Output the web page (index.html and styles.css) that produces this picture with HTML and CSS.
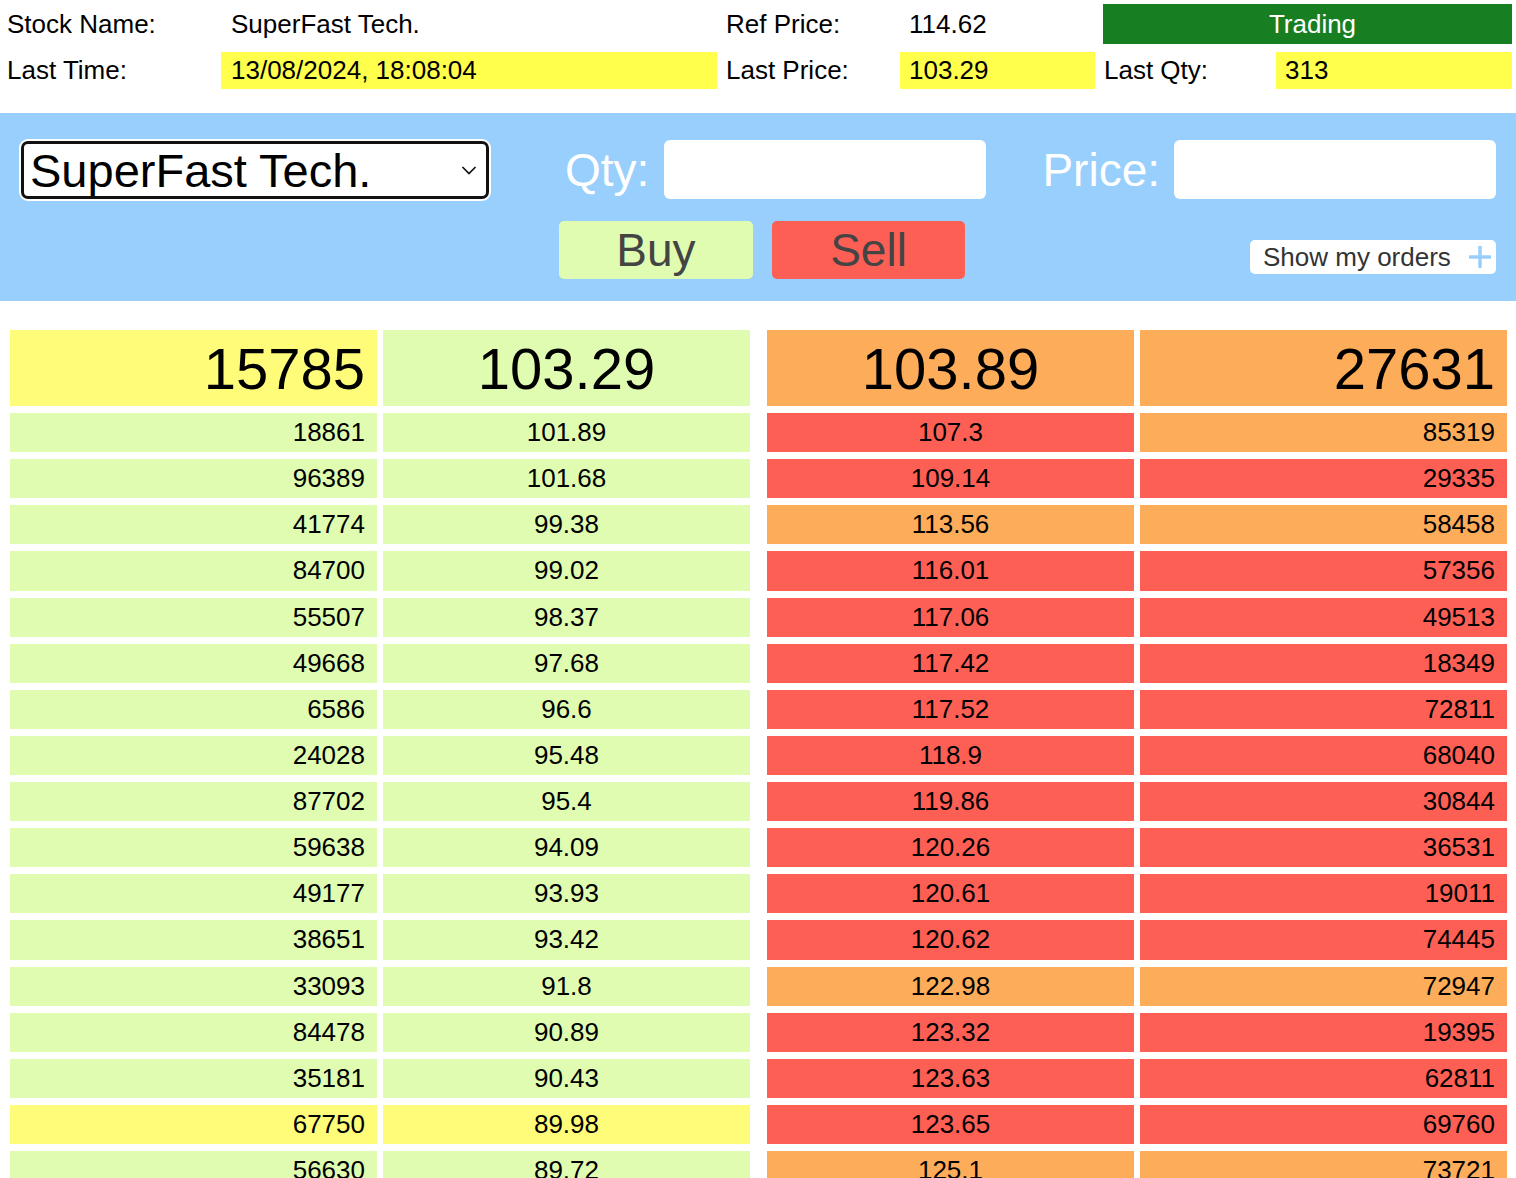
FILE: index.html
```html
<!DOCTYPE html>
<html lang="en">
<head>
<meta charset="utf-8">
<title>SuperFast Tech. Order Book</title>
<link rel="stylesheet" href="styles.css">
</head>
<body>
<div class="info">
  <div class="cell label">Stock Name:</div>
  <div class="cell value">SuperFast Tech.</div>
  <div class="cell label">Ref Price:</div>
  <div class="cell value">114.62</div>
  <div class="cell status">Trading</div>
  <div class="cell label">Last Time:</div>
  <div class="cell value hl">13/08/2024, 18:08:04</div>
  <div class="cell label">Last Price:</div>
  <div class="cell value hl">103.29</div>
  <div class="cell label">Last Qty:</div>
  <div class="cell value hl">313</div>
</div>

<div class="panel">
  <div class="panel-row">
    <div class="stock-select">
      <select class="select">
        <option>SuperFast Tech.</option>
      </select>
      <svg class="chevron" width="16" height="9" viewBox="0 0 16 9"><path d="M1.5 1 L8 7.5 L14.5 1" fill="none" stroke="#111" stroke-width="1.7"/></svg>
    </div>
    <label class="field-label qty-label">Qty:</label>
    <input class="field" type="text">
    <label class="field-label price-label">Price:</label>
    <input class="field" type="text">
  </div>
  <div class="panel-row actions">
    <button class="btn buy">Buy</button>
    <button class="btn sell">Sell</button>
    <button class="orders">Show my orders <svg class="plus" width="24" height="24" viewBox="0 0 24 24"><path d="M12 1 V23 M1 12 H23" stroke="#99cffc" stroke-width="3.5"/></svg></button>
  </div>
</div>

<div class="book">
  <div class="side">
    <div class="c y big right">15785</div><div class="c g big center">103.29</div>
    <div class="c g right">18861</div><div class="c g center">101.89</div>
    <div class="c g right">96389</div><div class="c g center">101.68</div>
    <div class="c g right">41774</div><div class="c g center">99.38</div>
    <div class="c g right">84700</div><div class="c g center">99.02</div>
    <div class="c g right">55507</div><div class="c g center">98.37</div>
    <div class="c g right">49668</div><div class="c g center">97.68</div>
    <div class="c g right">6586</div><div class="c g center">96.6</div>
    <div class="c g right">24028</div><div class="c g center">95.48</div>
    <div class="c g right">87702</div><div class="c g center">95.4</div>
    <div class="c g right">59638</div><div class="c g center">94.09</div>
    <div class="c g right">49177</div><div class="c g center">93.93</div>
    <div class="c g right">38651</div><div class="c g center">93.42</div>
    <div class="c g right">33093</div><div class="c g center">91.8</div>
    <div class="c g right">84478</div><div class="c g center">90.89</div>
    <div class="c g right">35181</div><div class="c g center">90.43</div>
    <div class="c y right">67750</div><div class="c y center">89.98</div>
    <div class="c g right">56630</div><div class="c g center">89.72</div>
  </div>
  <div class="side">
    <div class="c o big center">103.89</div><div class="c o big right">27631</div>
    <div class="c r center">107.3</div><div class="c o right">85319</div>
    <div class="c r center">109.14</div><div class="c r right">29335</div>
    <div class="c o center">113.56</div><div class="c o right">58458</div>
    <div class="c r center">116.01</div><div class="c r right">57356</div>
    <div class="c r center">117.06</div><div class="c r right">49513</div>
    <div class="c r center">117.42</div><div class="c r right">18349</div>
    <div class="c r center">117.52</div><div class="c r right">72811</div>
    <div class="c r center">118.9</div><div class="c r right">68040</div>
    <div class="c r center">119.86</div><div class="c r right">30844</div>
    <div class="c r center">120.26</div><div class="c r right">36531</div>
    <div class="c r center">120.61</div><div class="c r right">19011</div>
    <div class="c r center">120.62</div><div class="c r right">74445</div>
    <div class="c o center">122.98</div><div class="c o right">72947</div>
    <div class="c r center">123.32</div><div class="c r right">19395</div>
    <div class="c r center">123.63</div><div class="c r right">62811</div>
    <div class="c r center">123.65</div><div class="c r right">69760</div>
    <div class="c o center">125.1</div><div class="c o right">73721</div>
  </div>
</div>
</body>
</html>
```

FILE: styles.css
```css
html, body {
  margin: 0;
  padding: 0;
  background: #fff;
}

body {
  font-family: "Liberation Sans", Arial, sans-serif;
  color: #000;
}

/* ---------- top info grid ---------- */
.info {
  display: grid;
  grid-template-columns: 221px 496px 183px 195px 181px 236px;
  grid-template-rows: 40px 37px;
  row-gap: 8px;
  padding-top: 4px;
  font-size: 26px;
}

.cell {
  display: flex;
  align-items: center;
  white-space: nowrap;
}

.label {
  padding-left: 7px;
}

.info .label:nth-of-type(3),
.info .label:nth-of-type(8),
.info .label:nth-of-type(10) {
  padding-left: 9px;
}

.value {
  padding-left: 10px;
}

.info .value:nth-of-type(4),
.info .value:nth-of-type(9),
.info .value:nth-of-type(11) {
  padding-left: 9px;
}

.hl {
  background: #ffff4c;
}

.status {
  grid-column: span 2;
  margin-left: 8px;
  padding-left: 10px;
  background: #177f22;
  color: #fff;
  justify-content: center;
}

/* ---------- order panel ---------- */
.panel {
  margin-top: 24px;
  background: #99cffc;
  height: 188px;
  box-sizing: border-box;
  padding: 27px 20px 0 21px;
}

.panel-row {
  display: flex;
  align-items: center;
}

.stock-select {
  position: relative;
  flex-shrink: 0;
  width: 468px;
  height: 58px;
}

.select {
  appearance: none;
  -webkit-appearance: none;
  width: 100%;
  height: 100%;
  margin: 0;
  box-sizing: border-box;
  border: 3px solid #111;
  border-radius: 7px;
  box-shadow: 0 0 0 2px #fff;
  background: #fff;
  padding: 0 0 0 6px;
  font-family: "Liberation Sans", Arial, sans-serif;
  font-size: 47px;
  color: #000;
  outline: none;
}

.chevron {
  position: absolute;
  right: 12px;
  top: 25px;
  pointer-events: none;
}

.field-label {
  font-size: 46px;
  color: #fff;
  white-space: nowrap;
  flex-shrink: 0;
}

.qty-label {
  margin-left: 76px;
  margin-right: 15px;
}

.price-label {
  margin-left: auto;
  margin-right: 14px;
}

.field {
  flex-shrink: 0;
  width: 322px;
  height: 59px;
  box-sizing: border-box;
  border: none;
  border-radius: 6px;
  background: #fff;
  margin: 0;
  padding: 0 8px;
  font-size: 30px;
}

.actions {
  margin-top: 22px;
  align-items: flex-start;
}

.btn {
  height: 58px;
  border: none;
  border-radius: 5px;
  font-family: "Liberation Sans", Arial, sans-serif;
  font-size: 46px;
  color: #444;
  padding: 0;
  line-height: 58px;
}

.buy {
  width: 194px;
  margin-left: 538px;
  background: #dffcb0;
}

.sell {
  width: 193px;
  margin-left: 19px;
  background: #fe5f55;
}

.orders {
  margin-left: auto;
  margin-top: 19px;
  width: 246px;
  height: 34px;
  border: none;
  border-radius: 5px;
  background: #fff;
  font-family: "Liberation Sans", Arial, sans-serif;
  font-size: 26px;
  color: #333;
  padding: 0 4px 0 13px;
  display: flex;
  align-items: center;
  justify-content: space-between;
  white-space: nowrap;
}

.plus {
  display: block;
}

/* ---------- order book ---------- */
.book {
  display: flex;
  gap: 17px;
  padding: 29px 0 0 10px;
}

.side {
  display: grid;
  grid-template-columns: 367px 367px;
  grid-template-rows: 76px;
  grid-auto-rows: 39.125px;
  column-gap: 6px;
  row-gap: 7px;
}

.c {
  display: flex;
  align-items: center;
  font-size: 26px;
  padding: 0 12px;
  white-space: nowrap;
}

.big {
  font-size: 58px;
}

.right {
  justify-content: flex-end;
}

.center {
  justify-content: center;
}

.y { background: #fffc7a; }
.g { background: #dffcb0; }
.o { background: #fdac5a; }
.r { background: #fe5f55; }
```
